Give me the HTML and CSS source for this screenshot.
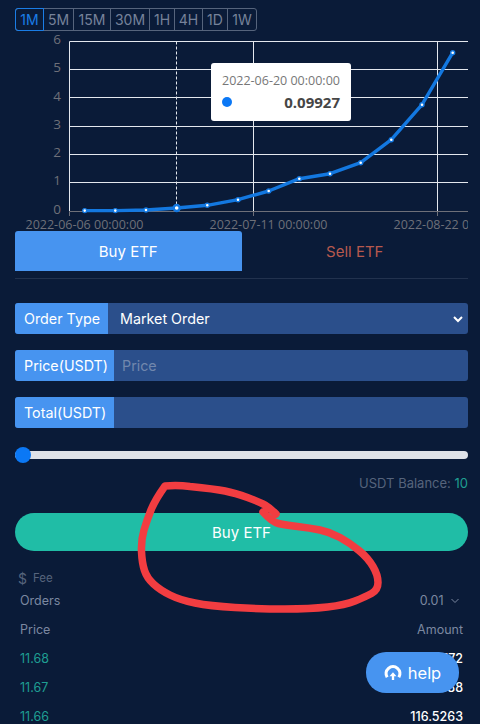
FILE: index.html
```html
<html>
<head>
    <meta charset="UTF-8">
    <meta name="viewport" content="width=device-width, initial-scale=1.0">
    <title>Buy ETF</title>
    <link rel="stylesheet" href="styles.css">
</head>
<body>
<div class="page">
    <div class="periods">
        <span class="period active p1">1M</span>
        <span class="period p2">5M</span>
        <span class="period p3">15M</span>
        <span class="period p4">30M</span>
        <span class="period p5">1H</span>
        <span class="period p6">4H</span>
        <span class="period p7">1D</span>
        <span class="period p8">1W</span>
    </div>

    <div class="chart">
        <svg class="chart-svg" width="468" height="200" viewBox="0 0 468 200">
            <g class="grid">
                <path d="M69.5 9.5H468M69.5 37.5H468M69.5 65.5H468M69.5 94.5H468M69.5 122.5H468M69.5 150.5H468"/>
                <path d="M69.5 9.5V179M253.5 9.5V179M437.5 9.5V179"/>
            </g>
            <path class="axis" d="M69.5 179.5H468M69.5 179.5V184M253.5 179.5V184M437.5 179.5V184"/>
            <path class="cursor" d="M176.5 9.5V179"/>
            <polyline class="line" points="84.7,178.6 115.3,178.6 146,178 176.7,176 207.3,173.3 238,167.7 268.7,159 299.3,146.7 330,141.7 360.7,130.7 391.3,107.7 422,72.7 452.7,20.7"/>
            <g class="dots">
                <circle cx="84.7" cy="178.6" r="2"/>
                <circle cx="115.3" cy="178.6" r="2"/>
                <circle cx="146" cy="178" r="2"/>
                <circle cx="207.3" cy="173.3" r="2"/>
                <circle cx="238" cy="167.7" r="2"/>
                <circle cx="268.7" cy="159" r="2"/>
                <circle cx="299.3" cy="146.7" r="2"/>
                <circle cx="330" cy="141.7" r="2"/>
                <circle cx="360.7" cy="130.7" r="2"/>
                <circle cx="391.3" cy="107.7" r="2"/>
                <circle cx="422" cy="72.7" r="2"/>
                <circle cx="452.7" cy="20.7" r="2"/>
            </g>
            <circle class="dot-hover" cx="176.7" cy="176" r="3"/>
            <g class="y-labels">
                <text x="61" y="12">6</text>
                <text x="61" y="40">5</text>
                <text x="61" y="69">4</text>
                <text x="61" y="97">3</text>
                <text x="61" y="125">2</text>
                <text x="61" y="153">1</text>
                <text x="61" y="182">0</text>
            </g>
            <g class="x-labels">
                <text x="84.5" y="197">2022-06-06 00:00:00</text>
                <text x="268.5" y="197">2022-07-11 00:00:00</text>
                <text x="452.5" y="197">2022-08-22 00:00:00</text>
            </g>
        </svg>
        <div class="tooltip">
            <div class="tooltip-date">2022-06-20 00:00:00</div>
            <div class="tooltip-row">
                <span class="tooltip-dot"></span>
                <span class="tooltip-value">0.09927</span>
            </div>
        </div>
    </div>

    <div class="tabs">
        <div class="tab tab-buy">Buy ETF</div>
        <div class="tab tab-sell">Sell ETF</div>
    </div>

    <div class="field">
        <label class="field-label">Order Type</label>
        <div class="field-select">
            <span>Market Order</span>
            <svg class="chevron" width="12" height="8" viewBox="0 0 12 8"><path d="M2 2l4 4 4-4"/></svg>
        </div>
    </div>
    <div class="field">
        <label class="field-label wide">Price(USDT)</label>
        <div class="field-input placeholder">Price</div>
    </div>
    <div class="field">
        <label class="field-label wide">Total(USDT)</label>
        <div class="field-input"></div>
    </div>

    <div class="slider"><span class="slider-thumb"></span></div>

    <div class="balance">USDT Balance: <span class="green">10</span></div>

    <div class="buy-btn">Buy ETF</div>

    <div class="fee"><span class="fee-sign">$</span>Fee</div>
    <div class="row orders-head"><span>Orders</span><span>0.01 <svg class="small-chevron" width="10" height="6" viewBox="0 0 10 6"><path d="M1.5 1l3.5 3.5L8.5 1"/></svg></span></div>
    <div class="row orders-head"><span>Price</span><span>Amount</span></div>
    <div class="row order"><span class="green">11.68</span><span>116.6772</span></div>
    <div class="row order"><span class="green">11.67</span><span>116.5688</span></div>
    <div class="row order"><span class="green">11.66</span><span>116.5263</span></div>
</div>

<div class="help">
    <svg width="18" height="16" viewBox="0 0 17 15">
        <path class="help-arc" d="M3 11.5A6.5 6.5 0 1 1 14 11.5"/>
        <path class="help-arrow" d="M5.2 10.5L8.5 6.8 11.8 10.5H9.6V14H7.4V10.5Z"/>
    </svg>
    help
</div>

<svg class="scribble" width="480" height="724" viewBox="0 0 480 724">
    <path d="M263 512Q272 522 278.5 523.5Q285 525 297.5 526.5Q310 528 320 530Q330 532 340 537.5Q350 543 359 550.5Q368 558 373 566.5Q378 575 378 582.5Q378 590 371.5 593.5Q365 597 355 601Q345 605 327.5 607Q310 609 285 609Q260 609 235 607.5Q210 606 195 603Q180 600 170 595Q160 590 153.5 584Q147 578 144.5 570.5Q142 563 141.5 551.5Q141 540 144 530Q147 520 151 510Q155 500 165 486Q178 485 190 486.5Q215 489 225 491Q235 493 247.5 497.5Q260 502 265 505Q270 508 276 514"/>
</svg>
</body>
</html>
```

FILE: styles.css
```css
* {
    box-sizing: border-box;
}
html, body {
    margin: 0;
    height: 100%;
    overflow: hidden;
}
body {
    font-family: Inter, "Open Sans", sans-serif;
    background-color: #0a1b38;
    color: #fff;
}
.page {
    padding: 8px 12px 0 15px;
}
.periods {
    display: flex;
    width: 242px;
    height: 23px;
    border: 1px solid #56647c;
    border-radius: 3px;
    font-size: 14px;
    color: #76829a;
}
.period {
    display: flex;
    align-items: center;
    justify-content: center;
    border-right: 1px solid #56647c;
}
.period:last-child { border-right: none; }
.period.active {
    color: #1a7de6;
    margin: -1px 0 -1px -1px;
    border: 1px solid #1a7de6;
    border-radius: 3px 0 0 3px;
}
.p1 { width: 29px; }
.p2 { width: 30px; }
.p3 { width: 37px; }
.p4 { width: 39px; }
.p5 { width: 25px; }
.p6 { width: 28px; }
.p7 { width: 25px; }
.p8 { flex: 1; }

.chart {
    position: relative;
    margin: 1px 0 0 -15px;
    width: 468px;
    height: 199px;
}
.chart-svg {
    display: block;
}
.grid path {
    fill: none;
    stroke: #e4e8ee;
    stroke-width: 1;
}
.axis {
    fill: none;
    stroke: #6e7079;
    stroke-width: 1;
}
.cursor {
    fill: none;
    stroke: #e4e8ee;
    stroke-dasharray: 3 2;
}
.line {
    fill: none;
    stroke: #1378e0;
    stroke-width: 3.4;
    stroke-linejoin: round;
}
.dots circle {
    fill: #fff;
    stroke: #1378e0;
    stroke-width: 1.4;
}
.dot-hover {
    fill: #fff;
    stroke: #1378e0;
    stroke-width: 2.4;
}
.y-labels text {
    font-family: "Open Sans", sans-serif;
    font-size: 13.5px;
    fill: #6e7079;
    text-anchor: end;
}
.x-labels text {
    font-family: "Open Sans", sans-serif;
    font-size: 12.5px;
    fill: #6e7079;
    text-anchor: middle;
}
.tooltip {
    position: absolute;
    left: 211px;
    top: 31px;
    width: 140px;
    height: 57.5px;
    padding: 10px 11px;
    background: #fff;
    border-radius: 3px;
    color: #777;
    font-family: "Open Sans", sans-serif;
    white-space: nowrap;
}
.tooltip-date {
    font-size: 12.5px;
    line-height: 16px;
}
.tooltip-row {
    display: flex;
    align-items: center;
    justify-content: space-between;
    margin-top: 3px;
}
.tooltip-dot {
    width: 10px;
    height: 10px;
    border-radius: 50%;
    background: #0b78f5;
}
.tooltip-value {
    font-size: 15px;
    line-height: 20px;
    font-weight: 700;
    color: #464646;
}

.tabs {
    display: flex;
    height: 48px;
    border-bottom: 1px solid #22324e;
    font-size: 15px;
    padding-bottom: 7px;
}
.tab {
    flex: 1;
    display: flex;
    align-items: center;
    justify-content: center;
}
.tab-buy {
    background: #4794f0;
    border-radius: 3px 3px 0 0;
}
.tab-sell {
    color: #b8594e;
}

.field {
    display: flex;
    height: 31px;
    margin-bottom: 16px;
    background: #2b4f8b;
    border-radius: 3px;
    font-size: 14.3px;
}
.tabs + .field {
    margin-top: 24px;
}
.field-label {
    display: flex;
    align-items: center;
    width: 93px;
    padding-left: 9px;
    background: #4794f0;
    border-radius: 3px 0 0 3px;
}
.field-label.wide {
    width: 99px;
}
.field-select {
    flex: 1;
    display: flex;
    align-items: center;
    justify-content: space-between;
    padding: 0 4px 0 12px;
}
.chevron path {
    fill: none;
    stroke: #fff;
    stroke-width: 2;
}
.field-input {
    flex: 1;
    display: flex;
    align-items: center;
    padding-left: 8px;
}
.placeholder {
    color: #7187ad;
}

.slider {
    position: relative;
    height: 8px;
    margin-top: 23px;
    background: #dfe2e8;
    border-radius: 4px;
}
.slider-thumb {
    position: absolute;
    left: 0;
    top: -4px;
    width: 16px;
    height: 16px;
    border-radius: 50%;
    background: #0b78f5;
}
.balance {
    margin-top: 16px;
    text-align: right;
    font-size: 13px;
    line-height: 16px;
    color: #56647c;
}
.green {
    color: #1f9e92;
}
.buy-btn {
    display: flex;
    align-items: center;
    justify-content: center;
    height: 38px;
    margin-top: 22px;
    background: #20bda6;
    border-radius: 19px;
    font-size: 15px;
}
.fee {
    display: flex;
    align-items: center;
    height: 14px;
    margin-top: 20px;
    padding-left: 3px;
    font-size: 11.5px;
    color: #56647c;
}
.fee-sign {
    margin-right: 6px;
    font-size: 14px;
}
.row {
    display: flex;
    justify-content: space-between;
    align-items: center;
    height: 29px;
    padding: 0 5px;
    font-size: 12.5px;
}
.fee + .row {
    margin-top: 1px;
}
.orders-head {
    color: #7b88a0;
}
.order {
    font-weight: 500;
}
.order .green {
    font-weight: 400;
}
.small-chevron {
    margin: 0 3px 1px 3px;
}
.small-chevron path {
    fill: none;
    stroke: #7b88a0;
    stroke-width: 1;
}
.help {
    position: absolute;
    left: 366px;
    top: 652px;
    display: flex;
    align-items: center;
    justify-content: center;
    gap: 6px;
    width: 93px;
    height: 41px;
    background: #4794f0;
    border-radius: 20px;
    font-size: 16.5px;
}
.help-arc {
    fill: none;
    stroke: #fff;
    stroke-width: 3;
}
.help-arrow {
    fill: #fff;
}
.scribble {
    position: absolute;
    left: 0;
    top: 0;
    pointer-events: none;
}
.scribble path {
    fill: none;
    stroke: #f23d41;
    stroke-width: 7.5;
    stroke-linecap: round;
    stroke-linejoin: round;
}
```
